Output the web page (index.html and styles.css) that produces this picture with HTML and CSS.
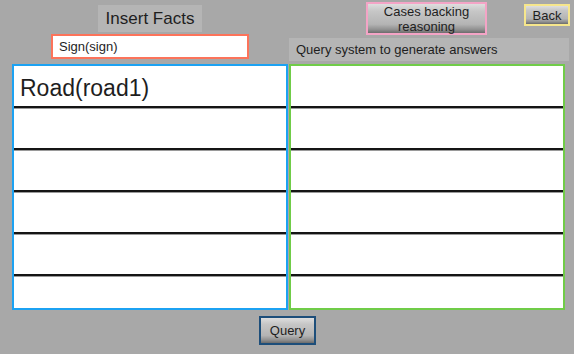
FILE: index.html
```html
<!DOCTYPE html>
<html lang="en">
  <head>
    <meta charset="UTF-8" />
    <meta name="viewport" content="width=device-width, initial-scale=1.0" />
    <title>Insert Facts</title>
    <link rel="stylesheet" href="styles.css">
  </head>
  <body>
    <div class="screen">
      <div class="head-left">
        <div class="title">Insert Facts</div>
        <div class="fact-input">Sign(sign)</div>
      </div>

      <div class="head-right">
        <div class="head-buttons">
          <button class="btn btn-cases">Cases backing<br />reasoning</button>
          <button class="btn btn-back">Back</button>
        </div>
        <div class="query-label">Query system to generate answers</div>
      </div>

      <div class="panel panel-facts">
        <div class="row big">Road(road1)</div>
        <div class="row"></div>
        <div class="row"></div>
        <div class="row"></div>
        <div class="row"></div>
        <div class="row"></div>
      </div>

      <div class="panel panel-answers">
        <div class="row"></div>
        <div class="row"></div>
        <div class="row"></div>
        <div class="row"></div>
        <div class="row"></div>
        <div class="row"></div>
      </div>

      <div class="footer">
        <button class="btn btn-query">Query</button>
      </div>
    </div>
  </body>
</html>
```

FILE: styles.css
```css
body {
  margin: 0;
  background: #a8a8a8;
  font-family: "Liberation Sans", Arial, sans-serif;
  color: #1e1e1e;
}
.screen {
  display: grid;
  grid-template-columns: 276px 281px;
  grid-template-rows: 64px 246px auto;
  column-gap: 1px;
  padding-left: 12px;
}
.head-left {
  display: flex;
  flex-direction: column;
  align-items: center;
}
.title {
  margin-top: 5px;
  width: 104px;
  height: 27px;
  line-height: 27px;
  text-align: center;
  font-size: 17px;
  background: #b5b5b5;
}
.fact-input {
  margin-top: 2px;
  box-sizing: border-box;
  width: 198px;
  height: 25px;
  line-height: 21px;
  padding-left: 6px;
  font-size: 13px;
  background: white;
  border: 2px solid #fc735a;
}
.head-right {
  padding-top: 2px;
}
.head-buttons {
  display: flex;
  align-items: flex-start;
}
.btn {
  box-sizing: border-box;
  padding: 0;
  font-family: inherit;
  font-size: 13px;
  color: #1e1e1e;
  border: 2px solid;
  border-radius: 0;
  background: linear-gradient(to bottom, #dedede 0%, #c6c6c6 25%, #b4b4b4 70%, #909090 88%, #6c6c6c 100%);
}
.btn-cases {
  margin-left: 77px;
  width: 121px;
  height: 33px;
  line-height: 15px;
  border-color: #f4a4c6;
}
.btn-back {
  margin-left: auto;
  margin-top: 2px;
  width: 46px;
  height: 22px;
  border-color: #f6e68c;
}
.query-label {
  margin-top: 3px;
  width: 280px;
  height: 23px;
  line-height: 23px;
  padding-left: 7px;
  box-sizing: border-box;
  font-size: 13px;
  background: #b5b5b5;
}
.panel {
  box-sizing: border-box;
  width: 276px;
  height: 246px;
  overflow: hidden;
  background: white;
  border: 2px solid;
}
.panel-facts {
  border-color: #1ca2f2;
}
.panel-answers {
  border-color: #70cc48;
}
.row {
  box-sizing: border-box;
  height: 42px;
  border-bottom: 2px solid #151515;
  box-shadow: 0 1px 0 #9a9a9a;
}
.row.big {
  font-size: 23px;
  line-height: 44px;
  padding-left: 6px;
}
.footer {
  grid-column: 1 / 3;
  display: flex;
  justify-content: center;
  padding-top: 6px;
  margin-left: -12px;
  margin-right: -5px;
}
.btn-query {
  width: 57px;
  height: 29px;
  border-color: #1d4e7a;
}
```
